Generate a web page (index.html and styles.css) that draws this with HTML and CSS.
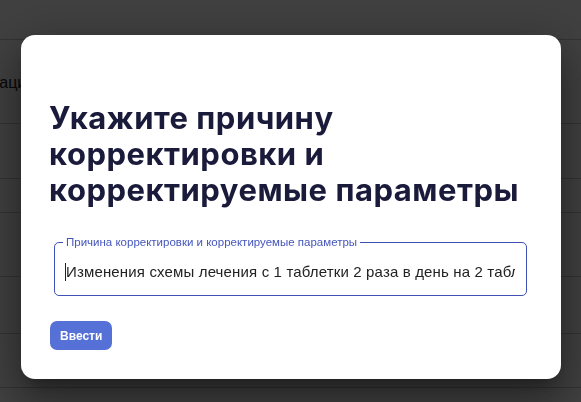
FILE: index.html
```html
<!DOCTYPE html>
<html lang="ru">
<head>
<meta charset="utf-8">
<title>Корректировка</title>
<link rel="stylesheet" href="styles.css">
</head>
<body>
<div class="page">
  <div class="page-header"></div>
  <div class="row row-1"><span class="cell-text">Локализация</span></div>
  <div class="row row-2"></div>
  <div class="row row-3"></div>
  <div class="row row-4"></div>
  <div class="row row-5"></div>
  <div class="row row-6"></div>
  <div class="row row-7"></div>
</div>
<div class="backdrop"></div>
<div class="dialog" role="dialog">
  <h1 class="dialog-title">Укажите причину корректировки и корректируемые параметры</h1>
  <fieldset class="field">
    <legend class="field-label">Причина корректировки и корректируемые параметры</legend>
    <div class="field-input"><span class="caret"></span>Изменения схемы лечения с 1 таблетки 2 раза в день на 2 таблетки 1 раз в день</div>
  </fieldset>
  <div class="actions">
    <button class="btn-primary" type="button">Ввести</button>
  </div>
</div>
</body>
</html>
```

FILE: styles.css
```css
html, body {
  margin: 0;
  padding: 0;
  width: 581px;
  height: 402px;
  overflow: hidden;
  background: #ffffff;
  font-family: "Liberation Sans", Arial, sans-serif;
}

.page {
  display: flex;
  flex-direction: column;
  width: 581px;
  height: 402px;
  overflow: hidden;
}

.page-header {
  height: 39px;
  flex: none;
  background: #ffffff;
}

.row {
  flex: none;
  border-top: 1px solid #c8c8c8;
  display: flex;
  align-items: center;
  overflow: hidden;
}

.row-1 { height: 83px; }
.row-2 { height: 54px; }
.row-3 { height: 33px; }
.row-4 { height: 63px; }
.row-5 { height: 56px; }
.row-6 { height: 53px; }
.row-7 { height: 14px; }

.cell-text {
  font-size: 16px;
  color: #222;
  white-space: nowrap;
  margin-left: -62px;
  margin-top: 2px;
}

.backdrop {
  position: fixed;
  inset: 0;
  background: rgba(0, 0, 0, 0.75);
}

.dialog {
  position: fixed;
  left: 21px;
  top: 35px;
  width: 540px;
  height: 344px;
  box-sizing: border-box;
  padding: 65px 29px 0 28px;
  background: #ffffff;
  border-radius: 14px;
  box-shadow: 0 11px 15px -7px rgba(0,0,0,0.3), 0 24px 38px 3px rgba(0,0,0,0.24), 0 9px 46px 8px rgba(0,0,0,0.22);
  display: flex;
  flex-direction: column;
}

.dialog-title {
  margin: 0;
  font-family: Inter, "Noto Sans", sans-serif;
  font-weight: 700;
  font-size: 31px;
  line-height: 36px;
  letter-spacing: 0.5px;
  color: #1a1b3b;
}

.field {
  margin: 28px 5px 0 5px;
  padding: 0 11px 0 11px;
  border: 1px solid #3f51b5;
  border-radius: 5px;
  height: 60px;
  box-sizing: border-box;
  min-width: 0;
}

.field-label {
  padding: 0 3px;
  margin-left: -3px;
  font-size: 11.5px;
  line-height: 12px;
  color: #4455bb;
}

.field-input {
  position: relative;
  margin-top: 15px;
  padding-left: 1px;
  margin-left: -1px;
  font-size: 15px;
  line-height: 18px;
  letter-spacing: 0.15px;
  color: #222222;
  white-space: nowrap;
  overflow: hidden;
}

.caret {
  position: absolute;
  left: 0;
  top: 0;
  width: 1px;
  height: 18px;
  background: #222222;
}

.actions {
  display: flex;
  margin-top: 25px;
  padding-left: 1px;
}

.btn-primary {
  height: 29px;
  padding: 0 10px;
  border: none;
  border-radius: 7px;
  background: #5570d6;
  color: #ffffff;
  font-family: "Liberation Sans", Arial, sans-serif;
  font-weight: 700;
  font-size: 12px;
  cursor: pointer;
}
```
